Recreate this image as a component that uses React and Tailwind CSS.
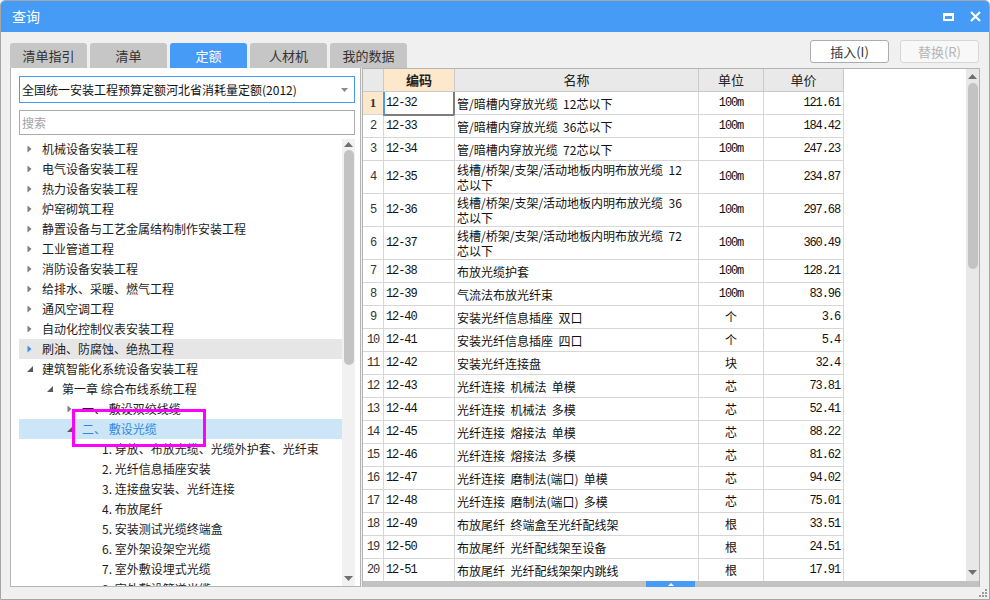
import React from "react";

const treeRows = [
  { level: 0, arrow: "right", text: "机械设备安装工程" },
  { level: 0, arrow: "right", text: "电气设备安装工程" },
  { level: 0, arrow: "right", text: "热力设备安装工程" },
  { level: 0, arrow: "right", text: "炉窑砌筑工程" },
  { level: 0, arrow: "right", text: "静置设备与工艺金属结构制作安装工程" },
  { level: 0, arrow: "right", text: "工业管道工程" },
  { level: 0, arrow: "right", text: "消防设备安装工程" },
  { level: 0, arrow: "right", text: "给排水、采暖、燃气工程" },
  { level: 0, arrow: "right", text: "通风空调工程" },
  { level: 0, arrow: "right", text: "自动化控制仪表安装工程" },
  { level: 0, arrow: "right", text: "刷油、防腐蚀、绝热工程", hover: true },
  { level: 0, arrow: "down", text: "建筑智能化系统设备安装工程" },
  { level: 1, arrow: "down", text: "第一章 综合布线系统工程" },
  { level: 2, arrow: "right", text: "一、 敷设双绞线缆" },
  { level: 2, arrow: "down", text: "二、 敷设光缆", selected: true },
  { level: 3, text: "1. 穿放、布放光缆、光缆外护套、光纤束" },
  { level: 3, text: "2. 光纤信息插座安装" },
  { level: 3, text: "3. 连接盘安装、光纤连接" },
  { level: 3, text: "4. 布放尾纤" },
  { level: 3, text: "5. 安装测试光缆终端盒" },
  { level: 3, text: "6. 室外架设架空光缆" },
  { level: 3, text: "7. 室外敷设埋式光缆" },
  { level: 3, text: "8. 室外敷设管道光缆" },
];

const levelPad = ["pl-[5px]", "pl-[25px]", "pl-[45px]", "pl-[65px]"];

const rows = [
  ["12-32", ["管/暗槽内穿放光缆  12芯以下"], "100m", "121.61"],
  ["12-33", ["管/暗槽内穿放光缆  36芯以下"], "100m", "184.42"],
  ["12-34", ["管/暗槽内穿放光缆  72芯以下"], "100m", "247.23"],
  ["12-35", ["线槽/桥架/支架/活动地板内明布放光缆  12", "芯以下"], "100m", "234.87"],
  ["12-36", ["线槽/桥架/支架/活动地板内明布放光缆  36", "芯以下"], "100m", "297.68"],
  ["12-37", ["线槽/桥架/支架/活动地板内明布放光缆  72", "芯以下"], "100m", "360.49"],
  ["12-38", ["布放光缆护套"], "100m", "128.21"],
  ["12-39", ["气流法布放光纤束"], "100m", "83.96"],
  ["12-40", ["安装光纤信息插座  双口"], "个", "3.6"],
  ["12-41", ["安装光纤信息插座  四口"], "个", "5.4"],
  ["12-42", ["安装光纤连接盘"], "块", "32.4"],
  ["12-43", ["光纤连接  机械法  单模"], "芯", "73.81"],
  ["12-44", ["光纤连接  机械法  多模"], "芯", "52.41"],
  ["12-45", ["光纤连接  熔接法  单模"], "芯", "88.22"],
  ["12-46", ["光纤连接  熔接法  多模"], "芯", "81.62"],
  ["12-47", ["光纤连接  磨制法(端口)  单模"], "芯", "94.02"],
  ["12-48", ["光纤连接  磨制法(端口)  多模"], "芯", "75.01"],
  ["12-49", ["布放尾纤  终端盒至光纤配线架"], "根", "33.51"],
  ["12-50", ["布放尾纤  光纤配线架至设备"], "根", "24.51"],
  ["12-51", ["布放尾纤  光纤配线架架内跳线"], "根", "17.91"],
];

const mono = "font-['Liberation_Mono','Noto_Sans_CJK_SC',monospace] text-[12px] tracking-[-1.1px]";

function Arrow({ type, color }) {
  if (type === "right") {
    return (
      <svg width="5" height="8" viewBox="0 0 5 8">
        <path d="M0.5 0.5 L4.5 4 L0.5 7.5Z" fill={color || "#7d7d7d"} />
      </svg>
    );
  }
  return (
    <svg width="6" height="6" viewBox="0 0 6 6">
      <path d="M6 0 L6 6 L0 6Z" fill="#595959" />
    </svg>
  );
}

function UpTri() {
  return (
    <svg width="9" height="5" viewBox="0 0 9 5">
      <path d="M0 5 L4.5 0 L9 5Z" fill="#707070" />
    </svg>
  );
}

function DownTri() {
  return (
    <svg width="9" height="5" viewBox="0 0 9 5">
      <path d="M0 0 L4.5 5 L9 0Z" fill="#707070" />
    </svg>
  );
}

function TreeRow({ row }) {
  let bg = "";
  if (row.hover) bg = "bg-[#e6e6e6]";
  if (row.selected) bg = "bg-[#cce6f8]";
  return (
    <div className={`flex h-[20px] shrink-0 items-center ${levelPad[row.level]} ${bg}`}>
      <span className="flex h-[20px] w-[18px] shrink-0 items-center pl-[3px]">
        {row.arrow && <Arrow type={row.arrow} color={row.hover ? "#3d8fe8" : undefined} />}
      </span>
      <span
        className={`whitespace-pre text-[12px] ${row.selected ? "text-[#2f8ae5]" : "text-[#1c1c1c]"}`}
      >
        {row.text}
      </span>
    </div>
  );
}

function TableRow({ r, i }) {
  const [code, name, unit, price] = r;
  const tall = name.length > 1;
  const first = i === 0;
  return (
    <div className={`flex shrink-0 ${tall ? "h-[33px]" : "h-[23px]"}`}>
      <div
        className={`flex w-[21px] shrink-0 items-center justify-center border-b border-r border-[#d6d6d6] text-[#333] ${
          first ? "bg-[#fde8cc] font-['Liberation_Serif',serif] text-[13px] font-bold" : mono
        }`}
      >
        {i + 1}
      </div>
      <div
        className={`relative flex w-[71px] shrink-0 items-center border-b border-r border-[#d6d6d6] pl-[2px] text-[#111] ${mono}`}
      >
        {code}
        {first && (
          <div className="absolute -left-[1px] top-0 h-[24px] w-[72px] border-b-2 border-l-2 border-r-2 border-b-[#7c7c7c] border-l-[#4a9af0] border-r-[#7c7c7c]" />
        )}
      </div>
      <div className="flex w-[244px] shrink-0 flex-col justify-center overflow-hidden border-b border-r border-[#d6d6d6] pl-[2px] text-[12px] leading-[15px] text-[#111]">
        {name.map((n) => (
          <div key={n} className="h-[15px] whitespace-pre">
            {n}
          </div>
        ))}
      </div>
      <div
        className={`flex w-[65px] shrink-0 items-center justify-center border-b border-r border-[#d6d6d6] text-[#111] ${
          unit === "100m" ? mono : "text-[12px]"
        }`}
      >
        {unit}
      </div>
      <div
        className={`flex w-[80px] shrink-0 items-center justify-end border-b border-r border-[#d6d6d6] pr-[3px] text-[#111] ${mono}`}
      >
        {price}
      </div>
    </div>
  );
}

const tabs = ["清单指引", "清单", "定额", "人材机", "我的数据"];

export default function App() {
  return (
    <div className="relative flex h-[600px] w-[990px] flex-col overflow-hidden rounded-t-[5px] border border-[#a6a6a6] bg-[#f0f0f0] font-['Noto_Sans_CJK_SC','Noto_Sans',sans-serif]">
      {/* title bar */}
      <div className="flex h-[31px] shrink-0 items-center justify-between bg-[#459bf5] pl-[11px] pr-[8px]">
        <span className="text-[14px] text-white">查询</span>
        <div className="flex items-center gap-[16px]">
          <div className="h-[8px] w-[11px] border-2 border-t-[3px] border-white" />
          <svg width="11" height="11" viewBox="0 0 11 11">
            <path d="M1 1 L10 10 M10 1 L1 10" stroke="white" strokeWidth="2.2" />
          </svg>
        </div>
      </div>

      {/* tabs + buttons */}
      <div className="flex h-[36px] shrink-0 items-end justify-between px-[9px]">
        <div className="flex h-[25px] gap-[3px]">
          {tabs.map((t) => (
            <div
              key={t}
              className={`flex w-[77px] items-center justify-center rounded-t-[3px] text-[13px] ${
                t === "定额" ? "bg-[#459bf5] text-white" : "bg-[#c6c6c6] text-[#333]"
              }`}
            >
              {t}
            </div>
          ))}
        </div>
        <div className="mb-[5px] flex gap-[11px] pr-[1px]">
          <button className="flex h-[23px] w-[79px] items-center justify-center rounded-[3px] border border-[#adadad] bg-white text-[13px] text-[#333]">
            插入(I)
          </button>
          <button className="flex h-[23px] w-[79px] items-center justify-center rounded-[3px] border border-[#d6d6d6] bg-[#f8f8f8] text-[13px] text-[#b5b5b5]">
            替换(R)
          </button>
        </div>
      </div>

      {/* main */}
      <div className="flex h-[519px] shrink-0 gap-[1px] px-[9px]">
        {/* left panel */}
        <div className="flex w-[351px] shrink-0 flex-col border-b border-l border-r border-[#b4b4b4] bg-white pl-[8px] pt-[8px]">
          <div className="flex h-[27px] w-[336px] shrink-0 items-center justify-between border border-[#459bf5] pl-[2px] pr-[6px]">
            <span className="text-[12px] text-[#111]">全国统一安装工程预算定额河北省消耗量定额(2012)</span>
            <svg width="7" height="4" viewBox="0 0 7 4">
              <path d="M0 0 L3.5 4 L7 0Z" fill="#8a8a8a" />
            </svg>
          </div>
          <div className="mt-[7px] flex h-[25px] w-[336px] shrink-0 items-center border border-[#ababab] pl-[2px] text-[12px] text-[#a3a3a3]">
            搜索
          </div>
          <div className="mt-[4px] flex min-h-0 flex-1">
            <div className="flex w-[323px] flex-col overflow-hidden">
              {treeRows.map((r) => (
                <TreeRow key={r.text} row={r} />
              ))}
            </div>
            <div className="flex w-[13px] flex-col items-center bg-[#f1f1f1]">
              <div className="flex h-[11px] items-center">
                <UpTri />
              </div>
              <div className="h-[215px] w-[10px] rounded-full bg-[#c3c3c3]" />
              <div className="flex-1" />
              <div className="mb-[2px] flex h-[11px] items-center">
                <DownTri />
              </div>
            </div>
          </div>
        </div>

        {/* table panel */}
        <div className="flex min-w-0 flex-1 flex-col border-l border-r border-t border-[#b4b4b4] bg-white">
          <div className="flex min-h-0 flex-1">
            <div className="flex min-w-0 flex-1 flex-col overflow-hidden">
              <div className="flex h-[23px] shrink-0">
                <div className="w-[21px] shrink-0 border-b border-r border-[#c9c9c9] bg-[#e9e9e9]" />
                <div className="flex w-[71px] shrink-0 items-center justify-center border-b border-r border-[#c9c9c9] bg-[#fde8cc] text-[13px] font-bold text-[#222]">
                  编码
                </div>
                <div className="flex w-[244px] shrink-0 items-center justify-center border-b border-r border-[#c9c9c9] bg-[#e9e9e9] text-[13px] text-[#222]">
                  名称
                </div>
                <div className="flex w-[65px] shrink-0 items-center justify-center border-b border-r border-[#c9c9c9] bg-[#e9e9e9] text-[13px] text-[#222]">
                  单位
                </div>
                <div className="flex w-[80px] shrink-0 items-center justify-center border-b border-r border-[#c9c9c9] bg-[#e9e9e9] text-[13px] text-[#222]">
                  单价
                </div>
              </div>
              {rows.map((r, i) => (
                <TableRow key={r[0]} r={r} i={i} />
              ))}
            </div>
            <div className="flex w-[13px] shrink-0 flex-col items-center bg-[#e8e8e8]">
              <div className="flex h-[14px] items-center">
                <UpTri />
              </div>
              <div className="h-[186px] w-[10px] rounded-full bg-[#c3c3c3]" />
              <div className="flex-1" />
              <div className="mb-[3px] flex h-[11px] items-center">
                <DownTri />
              </div>
            </div>
          </div>
          <div className="flex h-[6px] shrink-0 items-center bg-[#c2c2c2]">
            <div className="w-[283px]" />
            <div className="flex h-[6px] w-[49px] items-center justify-center bg-[#459bf5]">
              <svg width="6" height="3" viewBox="0 0 6 3">
                <path d="M0 3 L3 0 L6 3Z" fill="white" />
              </svg>
            </div>
          </div>
        </div>
      </div>

      {/* bottom strip with grip */}
      <div className="flex flex-1 items-end justify-end pb-[2px] pr-[2px]">
        <svg width="9" height="9" viewBox="0 0 9 9">
          <rect x="7" y="1" width="2" height="2" fill="#9c9c9c" />
          <rect x="4" y="4" width="2" height="2" fill="#9c9c9c" />
          <rect x="7" y="4" width="2" height="2" fill="#9c9c9c" />
          <rect x="1" y="7" width="2" height="2" fill="#9c9c9c" />
          <rect x="4" y="7" width="2" height="2" fill="#9c9c9c" />
          <rect x="7" y="7" width="2" height="2" fill="#9c9c9c" />
        </svg>
      </div>

      {/* annotation box */}
      <div className="pointer-events-none absolute left-[71px] top-[408px] h-[38px] w-[134px] border-[3px] border-[#ff00ff]" />
    </div>
  );
}
